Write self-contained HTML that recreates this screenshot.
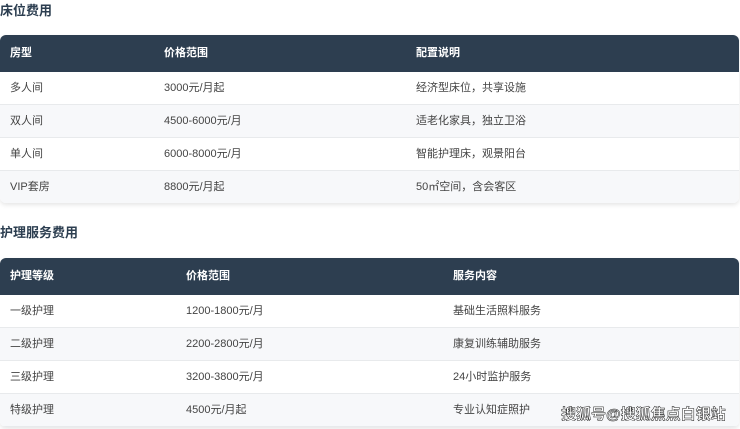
<!DOCTYPE html>
<html><head><meta charset="utf-8"><style>
body{margin:0;width:740px;height:429px;background:#fff;font-family:"Liberation Sans","Noto Sans CJK SC",sans-serif;position:relative;overflow:hidden}
h3{position:absolute;left:0;margin:0;font-size:13px;font-weight:bold;color:#2c3e50}
.t{position:absolute;left:0;width:739px;border-radius:6px;overflow:hidden;box-shadow:0 2px 5px rgba(0,0,0,.1)}
.r{position:relative;height:32px;border-bottom:1px solid #e8eaec;font-size:11px;color:#444;background:#fff}
.r:nth-child(odd){background:#f7f8fa}
.t .r.h{height:37px;background:#2d3e50;color:#fff;font-weight:bold;border:none}
.r span{position:absolute;top:0;line-height:32px}
.t .h span{line-height:37px}
.wm{position:absolute;left:561px;top:403px;font-size:15px;color:#fff;font-weight:bold;-webkit-text-stroke:0.5px #222}
</style></head><body>
<h3 style="top:0px">床位费用</h3>
<div class="t" style="top:35px">
<div class="r h"><span style="left:10px">房型</span><span style="left:164px">价格范围</span><span style="left:416px">配置说明</span></div>
<div class="r"><span style="left:10px">多人间</span><span style="left:164px">3000元/月起</span><span style="left:416px">经济型床位，共享设施</span></div>
<div class="r"><span style="left:10px">双人间</span><span style="left:164px">4500-6000元/月</span><span style="left:416px">适老化家具，独立卫浴</span></div>
<div class="r"><span style="left:10px">单人间</span><span style="left:164px">6000-8000元/月</span><span style="left:416px">智能护理床，观景阳台</span></div>
<div class="r" style="border:none"><span style="left:10px">VIP套房</span><span style="left:164px">8800元/月起</span><span style="left:416px">50㎡空间，含会客区</span></div>
</div>
<h3 style="top:222px">护理服务费用</h3>
<div class="t" style="top:258px">
<div class="r h"><span style="left:10px">护理等级</span><span style="left:186px">价格范围</span><span style="left:453px">服务内容</span></div>
<div class="r"><span style="left:10px">一级护理</span><span style="left:186px">1200-1800元/月</span><span style="left:453px">基础生活照料服务</span></div>
<div class="r"><span style="left:10px">二级护理</span><span style="left:186px">2200-2800元/月</span><span style="left:453px">康复训练辅助服务</span></div>
<div class="r"><span style="left:10px">三级护理</span><span style="left:186px">3200-3800元/月</span><span style="left:453px">24小时监护服务</span></div>
<div class="r"><span style="left:10px">特级护理</span><span style="left:186px">4500元/月起</span><span style="left:453px">专业认知症照护</span></div>
</div>
<div class="wm">搜狐号@搜狐焦点白银站</div>
</body></html>
